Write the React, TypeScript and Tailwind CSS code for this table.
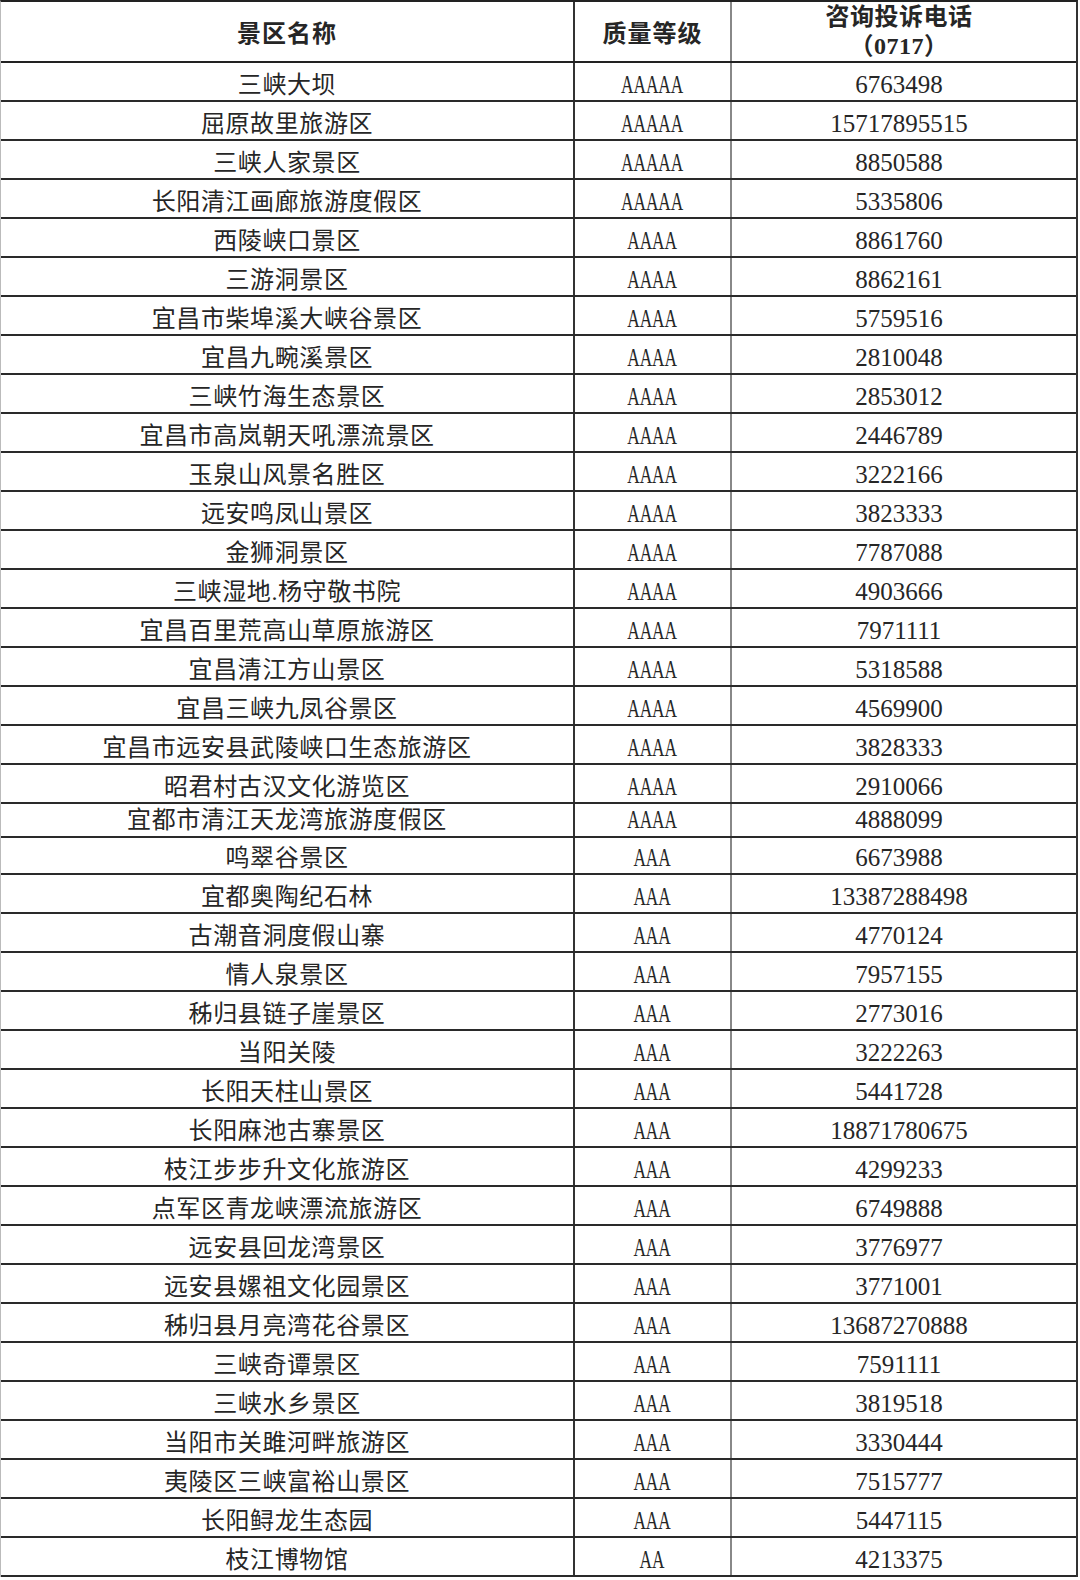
import React from "react";

type Row = { name: string; level: string; phone: string };

const rows: Row[] = [
  { name: "三峡大坝", level: "AAAAA", phone: "6763498" },
  { name: "屈原故里旅游区", level: "AAAAA", phone: "15717895515" },
  { name: "三峡人家景区", level: "AAAAA", phone: "8850588" },
  { name: "长阳清江画廊旅游度假区", level: "AAAAA", phone: "5335806" },
  { name: "西陵峡口景区", level: "AAAA", phone: "8861760" },
  { name: "三游洞景区", level: "AAAA", phone: "8862161" },
  { name: "宜昌市柴埠溪大峡谷景区", level: "AAAA", phone: "5759516" },
  { name: "宜昌九畹溪景区", level: "AAAA", phone: "2810048" },
  { name: "三峡竹海生态景区", level: "AAAA", phone: "2853012" },
  { name: "宜昌市高岚朝天吼漂流景区", level: "AAAA", phone: "2446789" },
  { name: "玉泉山风景名胜区", level: "AAAA", phone: "3222166" },
  { name: "远安鸣凤山景区", level: "AAAA", phone: "3823333" },
  { name: "金狮洞景区", level: "AAAA", phone: "7787088" },
  { name: "三峡湿地.杨守敬书院", level: "AAAA", phone: "4903666" },
  { name: "宜昌百里荒高山草原旅游区", level: "AAAA", phone: "7971111" },
  { name: "宜昌清江方山景区", level: "AAAA", phone: "5318588" },
  { name: "宜昌三峡九凤谷景区", level: "AAAA", phone: "4569900" },
  { name: "宜昌市远安县武陵峡口生态旅游区", level: "AAAA", phone: "3828333" },
  { name: "昭君村古汉文化游览区", level: "AAAA", phone: "2910066" },
  { name: "宜都市清江天龙湾旅游度假区", level: "AAAA", phone: "4888099" },
  { name: "鸣翠谷景区", level: "AAA", phone: "6673988" },
  { name: "宜都奥陶纪石林", level: "AAA", phone: "13387288498" },
  { name: "古潮音洞度假山寨", level: "AAA", phone: "4770124" },
  { name: "情人泉景区", level: "AAA", phone: "7957155" },
  { name: "秭归县链子崖景区", level: "AAA", phone: "2773016" },
  { name: "当阳关陵", level: "AAA", phone: "3222263" },
  { name: "长阳天柱山景区", level: "AAA", phone: "5441728" },
  { name: "长阳麻池古寨景区", level: "AAA", phone: "18871780675" },
  { name: "枝江步步升文化旅游区", level: "AAA", phone: "4299233" },
  { name: "点军区青龙峡漂流旅游区", level: "AAA", phone: "6749888" },
  { name: "远安县回龙湾景区", level: "AAA", phone: "3776977" },
  { name: "远安县嫘祖文化园景区", level: "AAA", phone: "3771001" },
  { name: "秭归县月亮湾花谷景区", level: "AAA", phone: "13687270888" },
  { name: "三峡奇谭景区", level: "AAA", phone: "7591111" },
  { name: "三峡水乡景区", level: "AAA", phone: "3819518" },
  { name: "当阳市关雎河畔旅游区", level: "AAA", phone: "3330444" },
  { name: "夷陵区三峡富裕山景区", level: "AAA", phone: "7515777" },
  { name: "长阳鲟龙生态园", level: "AAA", phone: "5447115" },
  { name: "枝江博物馆", level: "AA", phone: "4213375" },
];

const cjk = "font-['Liberation_Serif','Noto_Sans_CJK_SC',serif]";

export default function App() {
  return (
    <div className="w-[1080px] h-[1580px] bg-white text-[#262626]">
      <div className="w-[1078px] border-t-2 border-r-2 border-l border-t-[#222] border-r-[#333] border-l-[#bbb]">
        {/* header */}
        <div className={`grid grid-cols-[574px_157px_1fr] h-[61px] border-b-2 border-[#222] font-bold ${cjk}`}>
          <div className="flex items-center justify-center pt-[4px] text-[24px] tracking-[1px] border-r-2 border-[#333]">
            景区名称
          </div>
          <div className="flex items-center justify-center pt-[4px] text-[24px] tracking-[1px] border-r-2 border-[#888]">
            质量等级
          </div>
          <div className="flex flex-col items-center justify-center pr-[10px] text-[24px] leading-[29px] tracking-[0.5px]">
            <span>咨询投诉电话</span>
            <span>（0717）</span>
          </div>
        </div>

        {/* body: cell height + 2px bottom border = row pitch */}
        {rows.map((r, i) => {
          // the scanned sheet has two squeezed rows around the AAAA / AAA break
          const size = i === 19 ? "h-[32px] pt-0" : i === 20 ? "h-[35px] pt-[4px]" : "h-[37px] pt-[6px]";
          return (
            <div key={r.name} className="grid grid-cols-[574px_157px_1fr] border-b-2 border-[#2a2a2a]">
              <div className={`flex items-center justify-center text-[24px] tracking-[0.6px] border-r-2 border-[#333] ${size} ${cjk}`}>
                {r.name}
              </div>
              <div className={`flex items-center justify-center border-r-2 border-[#888] font-['Liberation_Serif',serif] text-[25px] ${size}`}>
                <span className="inline-block scale-x-[0.69]">{r.level}</span>
              </div>
              <div className={`flex items-center justify-center pr-[10px] font-['Liberation_Serif',serif] text-[25px] ${size}`}>
                {r.phone}
              </div>
            </div>
          );
        })}
      </div>
    </div>
  );
}
